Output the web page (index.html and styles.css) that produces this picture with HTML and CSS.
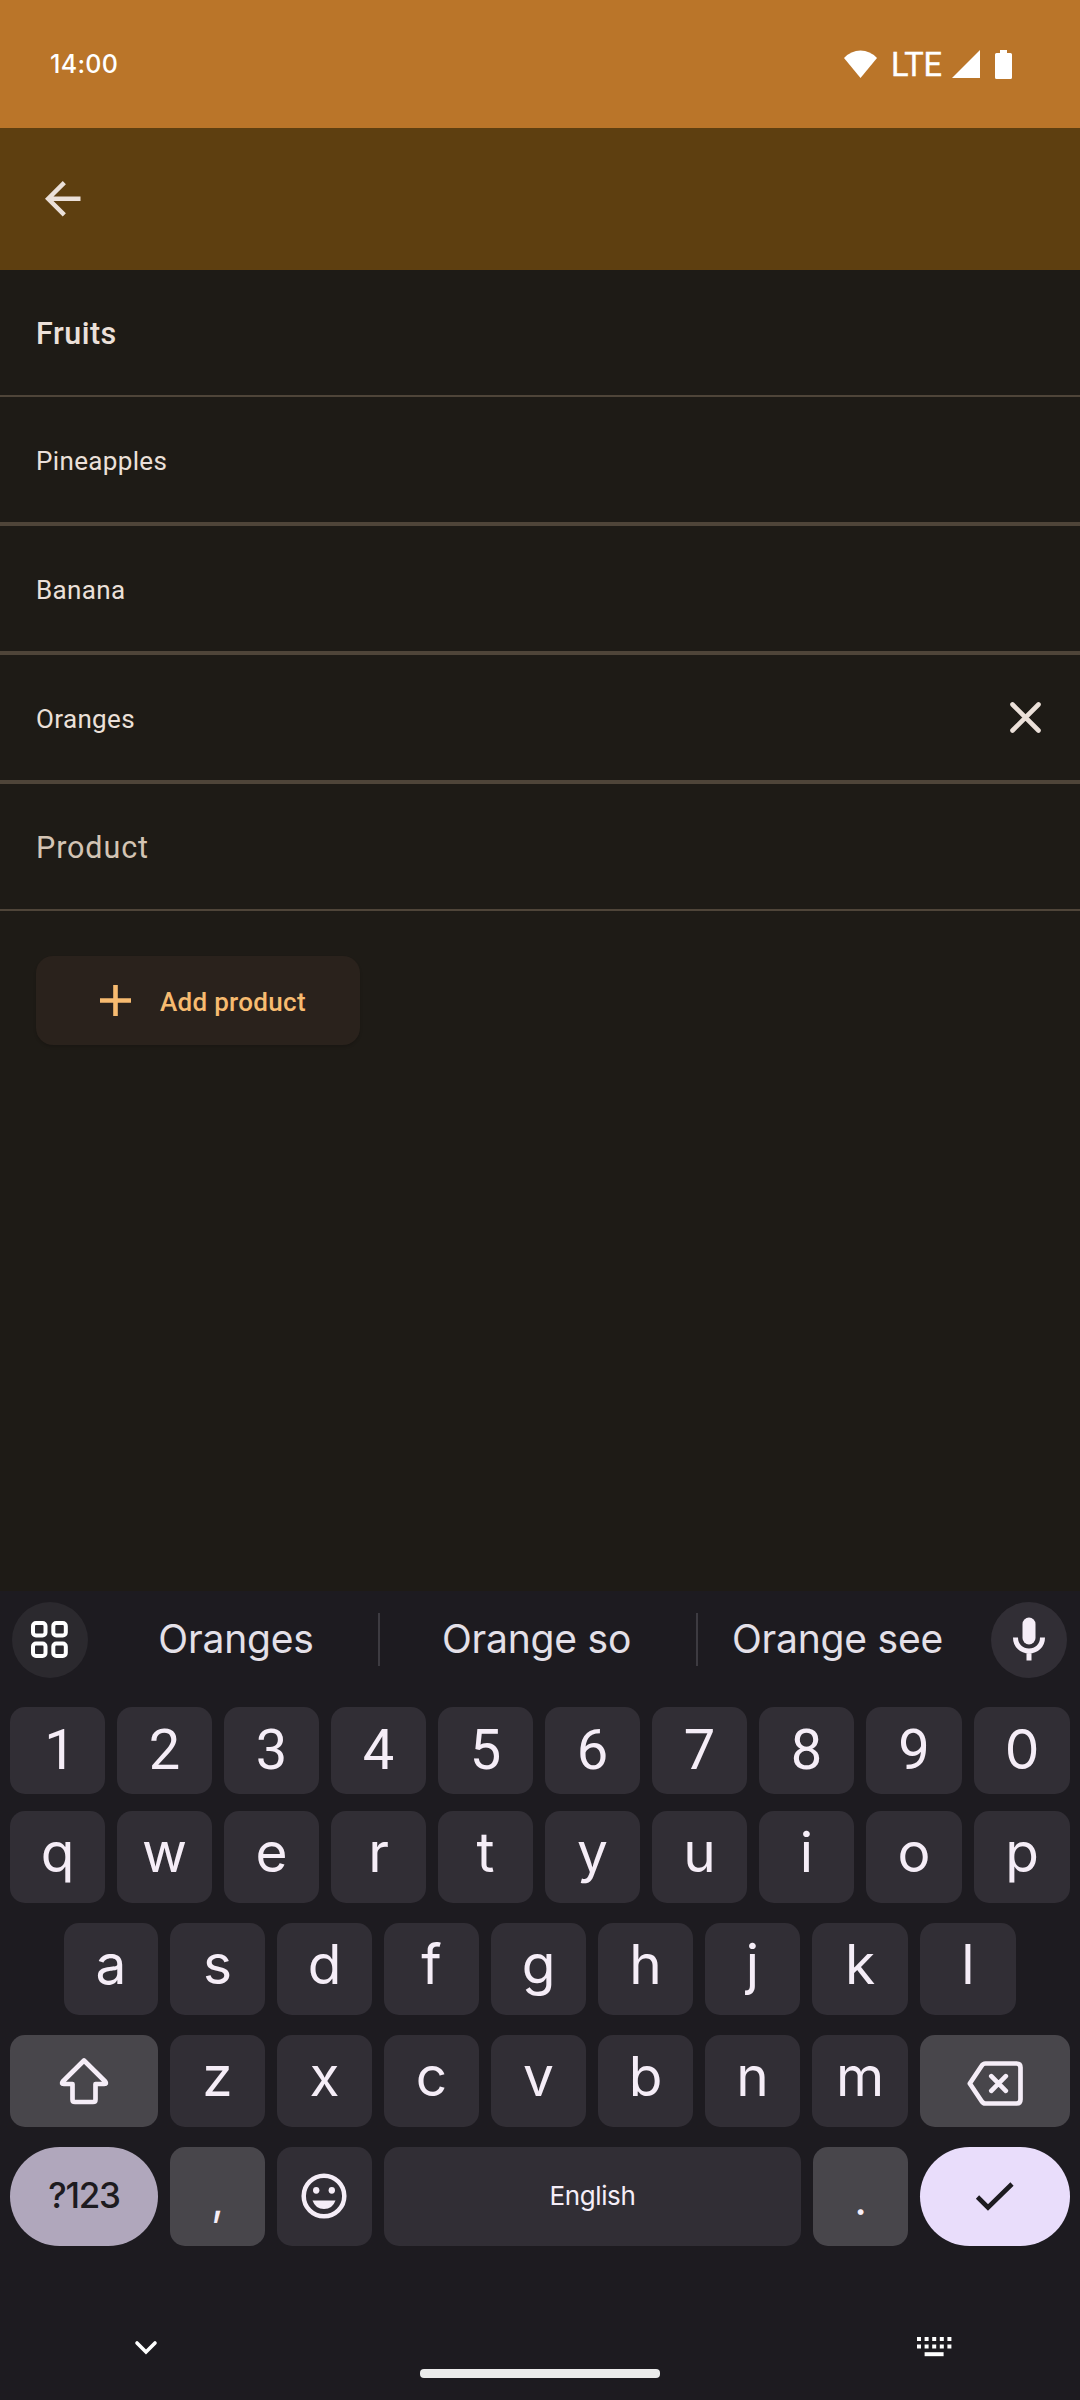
FILE: index.html
```html
<!DOCTYPE html>
<html lang="en">
<head>
<meta charset="utf-8">
<title>Fruits</title>
<link rel="stylesheet" href="styles.css">
</head>
<body>
<div class="screen">
  <header class="status">
    <span class="clock">14:00</span>
    <div class="indicators">
      <svg class="wifi" width="33" height="28" viewBox="0 0 33 28"><path d="M0 8Q7 0.5 16.500 0.500T33 8L16.500 28z"/></svg>
      <span class="lte">LTE</span>
      <svg class="signal" width="28" height="28" viewBox="0 0 28 28"><path d="M28 0V28H0z"/></svg>
      <svg class="battery" width="17" height="29" viewBox="0 0 17 29"><path d="M5 0h7v3h3.500q1.500 0 1.500 1.500v23q0 1.500-1.500 1.500h-14Q0 29 0 27.500v-23Q0 3 1.500 3H5z"/></svg>
    </div>
  </header>
  <nav class="appbar">
    <svg width="35.500" height="35.500" viewBox="4 4 16 16"><path d="M20 11H7.830l5.590-5.590L12 4l-8 8 8 8 1.410-1.410L7.830 13H20z"/></svg>
  </nav>
  <main class="content">
    <div class="row title">Fruits</div>
    <div class="row item">Pineapples</div>
    <div class="row item">Banana</div>
    <div class="row item"><span>Oranges</span>
      <svg class="clear" width="31" height="31" viewBox="0 0 31 31"><path d="M2.500 2.500l26 26M28.500 2.500l-26 26"/></svg>
    </div>
    <div class="row placeholder">Product</div>
    <button class="add">
      <svg width="31" height="31" viewBox="0 0 31 31"><path d="M0 15.500h31M15.500 0v31"/></svg>
      <span>Add product</span>
    </button>
  </main>
  <section class="keyboard">
    <div class="strip">
      <div class="round apps"><svg width="37" height="37" viewBox="0 0 37 37"><rect x="2" y="2" width="12.500" height="12.500" rx="3"/><rect x="22.300" y="2" width="12.500" height="12.500" rx="3"/><rect x="2" y="22.500" width="12.500" height="12.500" rx="3"/><rect x="22.300" y="22.500" width="12.500" height="12.500" rx="3"/></svg></div>
      <div class="suggestions">
        <span>Oranges</span><i></i><span>Orange so</span><i></i><span>Orange see</span>
      </div>
      <div class="round mic"><svg width="32" height="44" viewBox="0 0 32 44"><rect x="9.500" y="0.500" width="13" height="27" rx="6.500"/><path d="M2.500 20.500c0 8 6 13.500 13.500 13.500s13.500-5.500 13.500-13.500M16 34v9.500"/></svg></div>
    </div>
    <div class="keys digits">
      <b class="one">1</b><b>2</b><b>3</b><b>4</b><b>5</b><b>6</b><b>7</b><b>8</b><b>9</b><b class="zero">0</b>
    </div>
    <div class="keys top">
      <b>q</b><b>w</b><b>e</b><b>r</b><b>t</b><b>y</b><b>u</b><b>i</b><b>o</b><b>p</b>
    </div>
    <div class="keys home">
      <b>a</b><b>s</b><b>d</b><b>f</b><b>g</b><b>h</b><b>j</b><b>k</b><b>l</b>
    </div>
    <div class="keys lower">
      <b class="alt shift"><svg width="50" height="48" viewBox="0 0 50 48"><path d="M25 3.500L3.800 24.500q-2 2.500 1 2.500h8.700v15.500q0 2.500 2.500 2.500h18q2.500 0 2.500-2.500v-15.500h8.700q3 0 1-2.500z"/></svg></b>
      <b>z</b><b>x</b><b>c</b><b>v</b><b>b</b><b>n</b><b>m</b>
      <b class="alt erase"><svg width="56" height="45" viewBox="0 0 56 45"><path d="M2.800 22.500L14.500 5q1.500-2.500 4-2.500h31q4 0 4 4v32q0 4-4 4h-31q-2.500 0-4-2.500zM24.300 15.200l14.500 14.600M38.800 15.200L24.300 29.800"/></svg></b>
    </div>
    <div class="keys bottom">
      <b class="symbols">?123</b>
      <b class="alt comma">,</b>
      <b class="emoji"><svg width="46" height="46" viewBox="0 0 46 46"><circle cx="23" cy="23" r="20.300"/><path d="M11.500 27.500h23q-3 8.500-11.500 8.500t-11.500-8.500z"/><ellipse cx="15.200" cy="17.300" rx="3.200" ry="3.400"/><ellipse cx="30.800" cy="17.300" rx="3.200" ry="3.400"/></svg></b>
      <b class="space">English</b>
      <b class="alt period">.</b>
      <b class="enter"><svg width="40" height="32" viewBox="0 0 40 32"><path d="M2.500 16L13 26.500 37 3"/></svg></b>
    </div>
    <footer class="navbar">
      <svg class="hide" width="22" height="14" viewBox="0 0 22 14"><path d="M2 2l9 9 9-9"/></svg>
      <span class="handle"></span>
      <svg class="switcher" width="35" height="20" viewBox="0 0 35 20"><path d="M0 2h35" stroke-dasharray="4 3.600"/><path d="M0 9.500h35" stroke-dasharray="4 3.600"/><path d="M7.600 17.200h19"/></svg>
    </footer>
  </section>
</div>
</body>
</html>
```
FILE: styles.css
```css
* { box-sizing: border-box; }
body { margin: 0; background: #1e1b16; }
svg { display: block; flex: none; overflow: visible; }
.screen {
  width: 1080px;
  height: 2400px;
  display: flex;
  flex-direction: column;
  background: #1e1b16;
  font-family: Roboto, sans-serif;
  overflow: hidden;
}

.status {
  height: 128px;
  padding: 0 68px 0 50px;
  background: #ba7529;
  color: #fff;
  display: flex;
  align-items: center;
  justify-content: space-between;
}
.clock { font: 500 25px/30px Inter, sans-serif; letter-spacing: 0.3px; }
.indicators { display: flex; align-items: center; height: 29px; }
.indicators svg { fill: #fff; }
.lte { font-size: 32.5px; line-height: 32px; margin: 1px 9px 0 14px; width: 52px; -webkit-text-stroke: 0.4px #fff; }
.battery { margin-left: 15px; }

.appbar { height: 142px; padding: 0 45px 1px; background: #5e3f10; display: flex; align-items: center; }
.appbar svg { fill: #ebe0d9; }

.content { height: 1321px; }
.row {
  height: 129px;
  padding: 3px 39px 0 36px;
  border-bottom: 4px solid #4f4539;
  display: flex;
  align-items: center;
  justify-content: space-between;
  color: #ebe0d9;
}
.title { height: 127px; padding-top: 2px; border-bottom-width: 2px; font-size: 30.5px; font-weight: 500; letter-spacing: 0.5px; }
.item { font-size: 26px; letter-spacing: 0.35px; }
.placeholder { height: 127px; padding-top: 2px; border-bottom-width: 2px; font-size: 30.5px; letter-spacing: 0.9px; color: #d3c4b4; }
.clear { stroke: #ebe0d9; stroke-width: 4.6; stroke-linecap: round; margin-top: -3px; }
.add {
  margin: 45px 0 0 36px;
  padding: 0 0 0 64px;
  width: 324px;
  height: 89px;
  border: 0;
  border-radius: 17px;
  background: #2a221c;
  box-shadow: 0 2px 3px rgba(0, 0, 0, .15);
  color: #f7bb70;
  display: flex;
  align-items: center;
  gap: 29px;
  font: 500 26px/30px Roboto, sans-serif;
  letter-spacing: 0.3px;
}
.add svg { stroke: #f7bb70; stroke-width: 4.6; }
.add span { padding-top: 3px; }

.keyboard { height: 809px; background: #1d1b20; color: #f5edf7; font-family: Inter, sans-serif; }
.strip { height: 116px; padding: 11px 13px 0 12px; display: flex; justify-content: space-between; }
.round { width: 76px; height: 76px; border-radius: 50%; display: flex; align-items: center; justify-content: center; background: #312e35; }
.apps { background: #2b292e; padding: 0 1px 1px 0; }
.apps svg { fill: none; stroke: #fff; stroke-width: 4; }
.mic svg { fill: #f5edf7; }
.mic path { fill: none; stroke: #f5edf7; stroke-width: 5; }
.suggestions {
  height: 76px;
  display: grid;
  grid-template-columns: 284px 2px 316px 2px 279px;
  margin-right: auto;
  margin-left: 6px;
  font-size: 39px;
  line-height: 74px;
  letter-spacing: -0.2px;
  text-align: center;
  color: #e4e0e8;
}
.suggestions span:nth-of-type(2) { padding-right: 3px; }
.suggestions i { height: 53px; margin-top: 11px; background: #3d3b41; }
.mic { padding-bottom: 3px; }

.keys { display: grid; column-gap: 12px; padding: 0 10px; height: 92px; margin-bottom: 20px; }
.keys b {
  background: #312e35;
  border-radius: 15px;
  display: flex;
  align-items: center;
  justify-content: center;
  font-size: 55px;
  line-height: 60px;
  font-weight: 400;
  padding-bottom: 10px;
}
.keys .alt { background: #48464b; }
.digits, .top { grid-template-columns: repeat(8, 95px) 96px 96px; }
.digits { height: 87px; margin-bottom: 17px; }
.digits b { padding-bottom: 1px; font-family: Roboto, sans-serif; font-size: 56px; }
.digits .one { padding-left: 5px; }
.digits .zero { padding-bottom: 3px; font-family: Inter, sans-serif; font-size: 55px; }
.home { grid-template-columns: 94px repeat(6, 95px) 96px 96px; padding: 0 64px; }
.lower { grid-template-columns: 148px repeat(6, 95px) 96px 150px; }
.bottom { grid-template-columns: 148px 95px 95px 417px 95px 150px; height: 99px; margin: 0; }
.keys .shift, .keys .enter { padding: 0; }
.keys .emoji { padding: 0 1px 1px 0; }
.keys .erase { padding: 5px 0 0; }
.shift svg, .erase svg { fill: none; stroke: #f5edf7; stroke-width: 4.7; stroke-linecap: round; stroke-linejoin: round; }
.keys .symbols { background: #b0a7bc; color: #1d1b20; border-radius: 49.5px; font-size: 35px; font-weight: 500; letter-spacing: -1.2px; padding-bottom: 3px; }
.keys .comma, .keys .period { font-size: 44px; padding: 4px 0 0; }
.emoji svg { fill: #f5edf7; }
.emoji circle { fill: none; stroke: #f5edf7; stroke-width: 4.5; }
.keys .space { font-size: 26px; letter-spacing: -0.4px; padding-bottom: 2px; }
.keys .enter { background: #e9ddfb; border-radius: 49.5px; }
.enter svg { fill: none; stroke: #1d1b20; stroke-width: 4.6; }

.navbar { height: 154px; padding: 91px 128px 0 135px; display: grid; grid-template-columns: 285px 240px 257px 35px; align-items: start; }
.hide { margin-top: 4px; fill: none; stroke: #fff; stroke-width: 3.6; stroke-linecap: round; }
.handle { height: 9px; margin-top: 32px; border-radius: 4px; background: #ebebeb; }
.switcher { grid-column: 4; stroke: #fff; stroke-width: 4; }
```
